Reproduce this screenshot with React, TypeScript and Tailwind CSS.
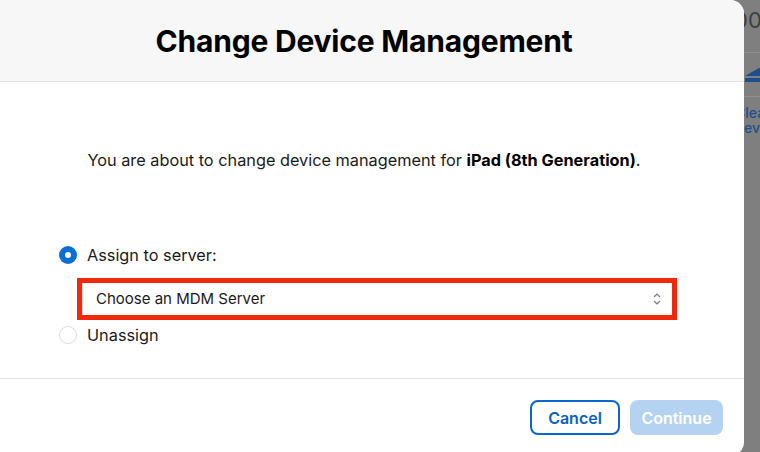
import React from "react";

export default function App() {
  const font = { fontFamily: "Inter, 'Noto Sans', 'Liberation Sans', sans-serif" };
  return (
    <div className="relative w-[760px] h-[452px] overflow-hidden bg-[#7d7d7d]" style={font}>
      {/* background page (dimmed) */}
      <div className="absolute left-[728px] top-0 w-[80px] h-full bg-[#7f7f7f]">
        <div className="h-[53px] border-b border-[#8e8e8e] flex items-start pt-[6px] pl-[6px] text-[22px] leading-[28px] text-[#3f3f3f]">000</div>
        <div className="h-[44px] border-b border-[#8e8e8e] flex items-center pl-[16px]">
          <svg width="30" height="16" viewBox="0 0 30 16">
            <polygon points="15,1 29,9 1,9" fill="#1d4e8e" />
            <rect x="1" y="11" width="28" height="4" fill="#1d4e8e" />
          </svg>
        </div>
        <div className="pl-[7px] pt-[8px] text-[14px] leading-[15px] text-[#1f4f8c] font-medium">
          <div>Clea</div>
          <div className="-ml-[1px]">Devic</div>
        </div>
      </div>

      {/* modal */}
      <div className="absolute left-[-16px] top-0 w-[760px] h-[456px] bg-white rounded-r-[14px] overflow-hidden flex flex-col">
        <div className="h-[82px] flex-none bg-[#f7f7f7] border-b border-[#e1e1e1] flex items-center justify-center">
          <h1 className="text-[30px] font-bold text-black tracking-[-0.2px] pt-[1px]">Change Device Management</h1>
        </div>
        <div className="flex-none h-[296px] flex flex-col">
          <p className="mt-[66px] text-center text-[16.3px] text-[#1a1a1a]">
            You are about to change device management for <span className="font-bold text-black">iPad (8th Generation)</span>.
          </p>
          <div className="mt-[71px] pl-[75px] flex flex-col">
            <div className="flex items-center gap-[10px] h-[24px]">
              <span className="w-[18px] h-[18px] rounded-full bg-[#0b6fd6] flex items-center justify-center">
                <span className="w-[6px] h-[6px] rounded-full bg-white" />
              </span>
              <span className="text-[16.3px] text-[#1a1a1a]">Assign to server:</span>
            </div>
            <div className="ml-[18px] mt-[11px] w-[600px] h-[42px] border-[5px] border-[#f0290c] bg-white flex">
              <div className="flex-1 border-l border-[#d8d8d8] flex items-center justify-between pl-[13px] pr-[10px]">
                <span className="text-[15px] text-[#1a1a1a]">Choose an MDM Server</span>
                <svg width="10" height="14" viewBox="0 0 10 14" fill="none" stroke="#7a7a7a" strokeWidth="1.2">
                  <polyline points="2,5 5,2 8,5" />
                  <polyline points="2,9 5,12 8,9" />
                </svg>
              </div>
            </div>
            <div className="flex items-center gap-[10px] h-[24px] mt-[3px]">
              <span className="w-[18px] h-[18px] rounded-full border border-[#dcdcdc] bg-white" />
              <span className="text-[16.3px] text-[#1a1a1a]">Unassign</span>
            </div>
          </div>
        </div>
        <div className="flex-1 border-t border-[#e1e1e1] flex items-start justify-end gap-[10px] pt-[21px] pr-[21px]">
          <button className="w-[90px] h-[35px] rounded-[8px] border-2 border-[#0a66c8] text-[#0a62c0] text-[16px] font-semibold bg-white">Cancel</button>
          <button className="w-[93px] h-[35px] rounded-[8px] bg-[#b5d2f3] text-white text-[16px] font-semibold">Continue</button>
        </div>
      </div>
    </div>
  );
}
